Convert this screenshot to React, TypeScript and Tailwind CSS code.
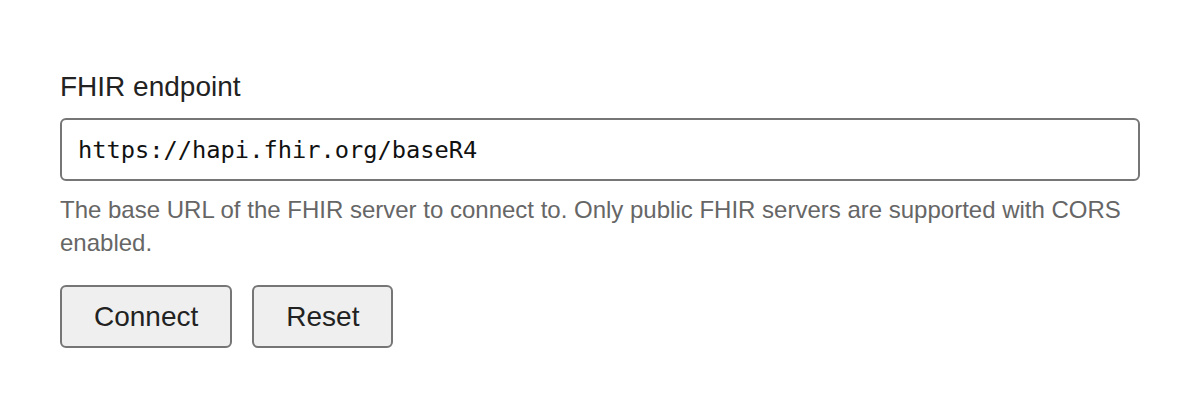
import React, { useState } from 'react';

const DEFAULT_ENDPOINT = 'https://hapi.fhir.org/baseR4';

export default function App() {
  const [endpoint, setEndpoint] = useState(DEFAULT_ENDPOINT);

  const handleConnect = (e: React.FormEvent) => {
    e.preventDefault();
  };

  return (
    <div className="min-h-[418px] bg-white px-[60px] pt-[68px] font-['Liberation_Sans',Arial,sans-serif] text-[#222]">
      <form onSubmit={handleConnect}>
        <label htmlFor="endpoint" className="block text-[28px] leading-[38px]">
          FHIR endpoint
        </label>
        <input
          id="endpoint"
          type="url"
          value={endpoint}
          onChange={(e) => setEndpoint(e.target.value)}
          className="mt-[12px] block h-[63px] w-full rounded-[6px] border-2 border-[#767676] bg-white px-4 font-['DejaVu_Sans_Mono',monospace] text-[23.7px] text-[#111] outline-none"
        />
        <p className="mt-[12px] text-[24px] leading-[33px] text-[#666]">
          The base URL of the FHIR server to connect to. Only public FHIR servers are supported with CORS enabled.
        </p>
        <div className="mt-[26px] flex gap-[20px]">
          <button
            type="submit"
            className="h-[63px] rounded-[6px] border-2 border-[#767676] bg-[#efefef] px-[32px] text-[28px] text-[#222]"
          >
            Connect
          </button>
          <button
            type="button"
            onClick={() => setEndpoint(DEFAULT_ENDPOINT)}
            className="h-[63px] rounded-[6px] border-2 border-[#767676] bg-[#efefef] px-[32px] text-[28px] text-[#222]"
          >
            Reset
          </button>
        </div>
      </form>
    </div>
  );
}
